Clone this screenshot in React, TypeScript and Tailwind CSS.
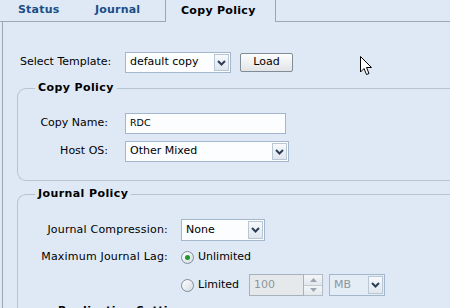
import React from 'react';

const Chevron = () => (
  <svg width="9" height="6" viewBox="0 0 9 6">
    <path d="M1 1 L4.5 4.5 L8 1" fill="none" stroke="#2d3e55" strokeWidth="2" />
  </svg>
);

const ArrowBox = () => (
  <div className="w-[15px] self-stretch my-[1px] mr-[1px] flex items-center justify-center border border-[#b9c6d4] bg-gradient-to-b from-[#f7f9fc] to-[#dfe6ee]">
    <Chevron />
  </div>
);

const FakeSelect = ({
  value,
  className,
  disabled,
}: {
  value: string;
  className: string;
  disabled?: boolean;
}) => (
  <div
    className={
      'flex items-stretch border border-[#a3b6cc] ' +
      (disabled ? 'bg-[#e4ecf6] text-[#8e959d] ' : 'bg-[#fbfdff] text-black ') +
      className
    }
  >
    <div className="flex-1 flex items-center pl-[4px]">{value}</div>
    <ArrowBox />
  </div>
);

const Radio = ({ checked }: { checked?: boolean }) => (
  <div className="w-[13px] h-[13px] rounded-full border border-[#7d8c9c] bg-gradient-to-br from-[#ffffff] to-[#d4dbe2] flex items-center justify-center">
    {checked && <div className="w-[5px] h-[5px] rounded-full bg-[#1f9a2a]" />}
  </div>
);

const Cursor = () => (
  <svg className="absolute left-[360px] top-[56px]" width="13" height="21" viewBox="0 0 13 21">
    <path
      d="M0.5 0.5 L0.5 16 L4 12.5 L6.5 18.5 L9 17.5 L6.5 11.5 L11.5 11.5 Z"
      fill="#fff"
      stroke="#000"
      strokeWidth="1"
    />
  </svg>
);

export default function App() {
  return (
    <div
      className="relative w-[450px] h-[308px] overflow-hidden bg-[#dfe9f5] text-[11px] text-black"
      style={{ fontFamily: '"DejaVu Sans", Verdana, sans-serif' }}
    >
      {/* Tabs */}
      <div className="flex h-[22px] border-b border-[#9aa8b6]">
        <div className="w-[77px] pl-[18px] flex items-center font-bold text-[#1b4f86] tracking-[0.2px]">Status</div>
        <div className="w-[88px] pl-[18px] flex items-center font-bold text-[#1b4f86] tracking-[0.2px]">Journal</div>
        <div className="w-[111px] pl-[15px] h-[22px] flex items-center font-bold tracking-[0.3px] border-l border-r border-[#9aa8b6] bg-[#dfe9f5] -mb-px">
          Copy Policy
        </div>
      </div>

      {/* Panel */}
      <div className="ml-[2px] h-[286px] border-l border-[#9aa8b6] pt-[30px]">
        <div className="flex items-center h-[21px]">
          <div className="ml-[17px] w-[105px]">Select Template:</div>
          <FakeSelect value="default copy" className="w-[106px] h-[21px]" />
          <div className="ml-[9px] w-[53px] h-[19px] flex items-center justify-center rounded-[2px] border border-[#7f8c99] bg-gradient-to-b from-[#fdfdfd] to-[#e2e4e6]">
            Load
          </div>
        </div>

        <fieldset className="mt-[8px] ml-[14px] border border-r-0 border-[#b7c3cf] rounded-l-[9px] pt-[18px] pb-[18px] px-0">
          <legend className="ml-[17px] px-[3px] font-bold tracking-[0.4px] leading-[14px]">Copy Policy</legend>
          <div className="flex items-center h-[21px]">
            <div className="w-[90px] text-right">Copy Name:</div>
            <div className="ml-[17px] w-[161px] h-[21px] flex items-center pl-[4px] border border-[#a3b6cc] bg-[#fbfdff] text-[9.5px]">
              RDC
            </div>
          </div>
          <div className="mt-[7px] flex items-center h-[21px]">
            <div className="w-[90px] text-right">Host OS:</div>
            <FakeSelect value="Other Mixed" className="ml-[17px] w-[164px] h-[21px]" />
          </div>
        </fieldset>

        <fieldset className="mt-[6px] ml-[14px] border border-r-0 border-[#b7c3cf] rounded-tl-[9px] pt-[18px] px-0 h-[140px]">
          <legend className="ml-[17px] px-[3px] font-bold tracking-[0.4px] leading-[14px]">Journal Policy</legend>
          <div className="flex items-center h-[22px]">
            <div className="w-[150px] text-right tracking-[0.2px]">Journal Compression:</div>
            <FakeSelect value="None" className="ml-[13px] w-[84px] h-[22px]" />
          </div>
          <div className="mt-[5px] flex items-center h-[22px]">
            <div className="w-[150px] text-right tracking-[0.2px]">Maximum Journal Lag:</div>
            <div className="ml-[13px]">
              <Radio checked />
            </div>
            <div className="ml-[4px]">Unlimited</div>
          </div>
          <div className="mt-[6px] flex items-center h-[22px]">
            <div className="ml-[163px]">
              <Radio />
            </div>
            <div className="ml-[4px] w-[40px]">Limited</div>
            <div className="ml-[11px] w-[55px] h-[22px] flex items-center pl-[4px] border border-[#a8b2bc] bg-[#e6e9ec] text-[#8f959b]">
              100
            </div>
            <div className="w-[19px] h-[22px] flex flex-col border border-l-0 border-[#b2bcc6]">
              <div className="flex-1 flex items-center justify-center border-b border-[#c2cbd4] bg-gradient-to-b from-[#f4f6f8] to-[#e3e8ed]">
                <svg width="7" height="4" viewBox="0 0 7 4"><path d="M0 4 L3.5 0 L7 4 Z" fill="#9aa5b1" /></svg>
              </div>
              <div className="flex-1 flex items-center justify-center bg-gradient-to-b from-[#f4f6f8] to-[#e3e8ed]">
                <svg width="7" height="4" viewBox="0 0 7 4"><path d="M0 0 L3.5 4 L7 0 Z" fill="#9aa5b1" /></svg>
              </div>
            </div>
            <FakeSelect value="MB" disabled className="ml-[6px] w-[56px] h-[22px]" />
          </div>
          <div className="mt-[8px] ml-[40px] font-bold tracking-[0.4px] leading-[14px]">Replication Settings</div>
        </fieldset>
      </div>

      <Cursor />
    </div>
  );
}
